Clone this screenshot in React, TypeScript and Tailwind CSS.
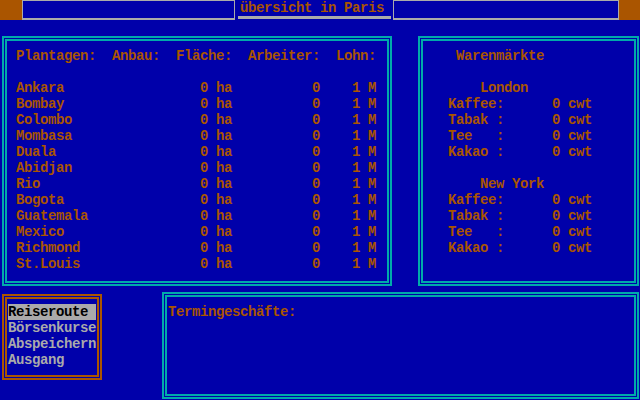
import React from 'react';

const cities = [
  'Ankara', 'Bombay', 'Colombo', 'Mombasa', 'Duala', 'Abidjan',
  'Rio', 'Bogota', 'Guatemala', 'Mexico', 'Richmond', 'St.Louis',
];

const goods = ['Kaffee:', 'Tabak :', 'Tee   :', 'Kakao :'];

// one 8x16 text cell row
const Line = ({ text, className = '' }: { text: string; className?: string }) => (
  <div className={`h-[16px] leading-[16px] whitespace-pre ${className}`}>{text || ' '}</div>
);

const Frame = ({ color, className = '', children }: { color: 'cyan' | 'orange'; className?: string; children: React.ReactNode }) => {
  const border = color === 'cyan' ? 'border-[#00AAAA]' : 'border-[#AA5500]';
  return (
    <div className={`border-2 ${border} p-[1px] ${className}`}>
      <div className={`border-2 ${border} h-full`}>{children}</div>
    </div>
  );
};

export default function App() {
  const plantRow = (name: string) => name.padEnd(23) + '0 ha' + ' '.repeat(10) + '0' + '    ' + '1 M';

  return (
    <div className="w-[640px] h-[400px] bg-[#0000AA] text-[#AA5500] font-bold text-[14px] tracking-[-0.4px] overflow-hidden"
      style={{ fontFamily: '"Liberation Mono", "DejaVu Sans Mono", monospace' }}>
      {/* title bar */}
      <div className="flex h-[20px]">
        <div className="w-[22px] bg-[#AA5500]" />
        <div className="w-[213px] border-x border-t border-b-2 border-[#AAAAAA]" />
        <div className="w-[158px] flex flex-col">
          <Line text="übersicht in Paris" className="pl-[5px]" />
          <div className="h-[3px] ml-[3px] mr-[2px] bg-[#AAAAAA]" />
        </div>
        <div className="w-[226px] border-x border-t border-b-2 border-[#AAAAAA]" />
        <div className="flex-1 bg-[#AA5500]" />
      </div>

      {/* main panels */}
      <div className="flex mt-[16px] pl-[2px] h-[250px]">
        <Frame color="cyan" className="w-[390px]">
          <div className="pl-[9px] pt-[7px]">
            <Line text="Plantagen:  Anbau:  Fläche:  Arbeiter:  Lohn:" />
            <Line text="" />
            {cities.map((c) => (
              <Line key={c} text={plantRow(c)} />
            ))}
          </div>
        </Frame>
        <Frame color="cyan" className="ml-[26px] w-[221px]">
          <div className="pl-[25px] pt-[7px]">
            <Line text=" Warenmärkte" />
            <Line text="" />
            <Line text="    London" />
            {goods.map((g) => (
              <Line key={'l' + g} text={g + '      0 cwt'} />
            ))}
            <Line text="" />
            <Line text="    New York" />
            {goods.map((g) => (
              <Line key={'n' + g} text={g + '      0 cwt'} />
            ))}
          </div>
        </Frame>
      </div>

      {/* bottom: menu + Termingeschäfte */}
      <div className="flex mt-[6px] pl-[2px]">
        <Frame color="orange" className="mt-[2px] w-[100px] h-[86px]">
          <div className="pl-[1px] pt-[5px]">
            <Line text="Reiseroute " className="w-[88px] bg-[#AAAAAA] text-black" />
            <Line text="Börsenkurse" className="text-[#AAAAAA]" />
            <Line text="Abspeichern" className="text-[#AAAAAA]" />
            <Line text="Ausgang" className="text-[#AAAAAA]" />
          </div>
        </Frame>
        <Frame color="cyan" className="ml-[60px] mr-[1px] flex-1 h-[107px]">
          <div className="pl-[1px] pt-[7px]">
            <Line text="Termingeschäfte:" />
          </div>
        </Frame>
      </div>
    </div>
  );
}
